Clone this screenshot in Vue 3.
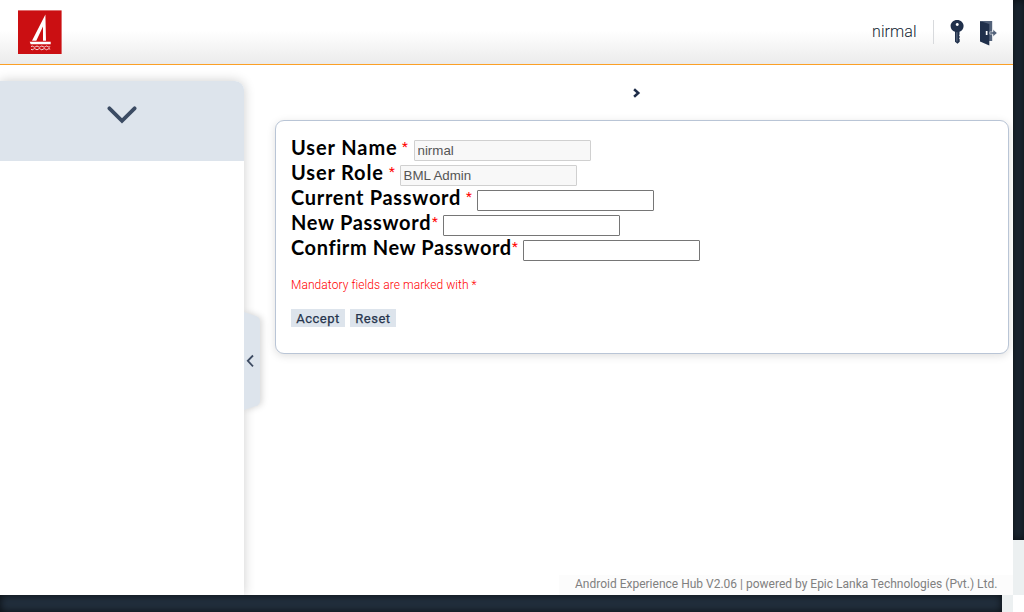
<script setup>
import { ref } from 'vue'

const fields = ref([
  { id: 'user', label: 'User Name', value: 'nirmal', disabled: true, type: 'text' },
  { id: 'role', label: 'User Role', value: 'BML Admin', disabled: true, type: 'text' },
  { id: 'current', label: 'Current Password', value: '', disabled: false, type: 'password' },
  { id: 'next', label: 'New Password', value: '', disabled: false, type: 'password' },
  { id: 'confirm', label: 'Confirm New Password', value: '', disabled: false, type: 'password' },
])
</script>

<template>
  <div class="window">
    <div class="page">
      <header class="header">
        <svg class="logo" viewBox="0 0 44 44">
          <rect width="43.6" height="43.6" y=".4" fill="#cb0f12" />
          <path d="M27.4 4.5 L28 30.8 H25 V16.5 L18.3 30.8 H14 Z" fill="#fff" />
          <path d="M11.7 31.7 H32.7 V34.2 H12.7 Z" fill="#fff" />
          <path d="M13 36.6 q1.2-1.2 2.4 0 t2.4 0 t2.4 0 t2.4 0 t2.4 0 t2.4 0 t2.4 0 t2.4 0 M13 39.2 q1.2 1.2 2.4 0 t2.4 0 t2.4 0 t2.4 0 t2.4 0 t2.4 0 t2.4 0 t2.4 0" fill="none" stroke="#fff" stroke-opacity=".85" stroke-width="1" />
        </svg>
        <div class="account">
          <span class="name">nirmal</span>
          <span class="divider"></span>
          <svg class="key" viewBox="0 0 14 26">
            <path fill-rule="evenodd" fill="#20304b" d="M7.1 .9 C10.8 .9 13.6 3.5 13.6 7 C13.6 9.9 11.7 12 9.5 12.7 V15.5 L9 16.5 L9.7 17.3 V18.5 L9 19.3 L9.7 20.2 V22.8 L7.5 24.8 L5 22.8 V12.7 C2.5 12 .6 9.9 .6 7 C.6 3.5 3.4 .9 7.1 .9 Z M7.2 3.9 A1.5 1.5 0 1 0 7.3 3.9 Z" />
            <path d="M6.9 13.2 V22.5" stroke="#7b8799" stroke-width=".8" />
          </svg>
          <svg class="door" viewBox="0 0 18 26">
            <path d="M1 1 H12.2 V21 H9 Z" fill="#53627a" />
            <path d="M0 1 L9.3 4 V25.4 L0 21.5 Z" fill="#20304b" />
            <rect x="5.8" y="11" width="1.7" height="4" fill="#fff" />
            <path d="M9.8 11.8 H13 V9.4 L17.2 13 L13 16.6 V14.2 H9.8 Z" fill="#53627a" stroke="#fff" stroke-width=".5" />
          </svg>
        </div>
      </header>
      <div class="body">
        <aside class="sidebar">
          <div class="menu-head">
            <svg class="chevron" viewBox="0 0 30 20">
              <path d="M2.4 3.3 L15 15.9 L27.6 3.3" fill="none" stroke="#3b4b63" stroke-width="3.8" stroke-linecap="round" />
            </svg>
          </div>
        </aside>
        <div class="handle">
          <svg viewBox="0 0 17 100">
            <path d="M0 1 L12 5 Q16 6.5 16 10 V90 Q16 93.5 12 95 L0 99 Z" fill="#dde4ec" />
            <path d="M9 44.5 L3.8 49.8 L9 55.3" fill="none" stroke="#3d4b62" stroke-width="1.8" />
          </svg>
        </div>
        <main class="content">
          <div class="crumb">
            <svg viewBox="0 0 8 10"><path d="M1.1 1.2 L5.3 5 L1.1 8.8" fill="none" stroke="#1f2d49" stroke-width="2.5" /></svg>
          </div>
          <section class="card">
            <div v-for="f in fields" :key="f.id" class="field" :class="f.id">
              <label class="label" :for="f.id">{{ f.label }}</label>
              <span class="star">*</span>
              <input :id="f.id" v-model="f.value" class="input" :type="f.type" :disabled="f.disabled" />
            </div>
            <p class="note">Mandatory fields are marked with *</p>
            <div class="actions">
              <button class="btn accept">Accept</button>
              <button class="btn reset">Reset</button>
            </div>
          </section>
          <footer class="footer">Android Experience Hub V2.06 | powered by Epic Lanka Technologies (Pvt.) Ltd.</footer>
        </main>
      </div>
    </div>
    <div class="track-v"><div class="thumb"></div></div>
    <div class="track-h"><div class="thumb"></div></div>
  </div>
</template>

<style>
body { margin: 0; overflow: hidden; background: #fff; }
</style>

<style scoped>
* { box-sizing: border-box; }
.window {
  display: grid;
  grid-template-columns: 1013px 11px;
  grid-template-rows: 595px 17px;
  width: 1024px;
  height: 612px;
  font-family: Roboto, sans-serif;
  background: #fff;
}
.page { display: flex; flex-direction: column; overflow: hidden; }
.header {
  flex: none;
  height: 65px;
  display: flex;
  justify-content: space-between;
  padding: 10px 15px 0 18px;
  border-bottom: 1px solid #fba026;
  background: linear-gradient(#fff 48%, #ebebeb);
}
.logo { width: 44px; height: 44px; }
.account { display: flex; align-items: flex-start; }
.name { font-size: 16px; font-weight: 300; line-height: 20px; margin-top: 12px; color: #101c30; width: 45px; white-space: nowrap; letter-spacing: .1px; }
.divider { width: 1px; height: 24px; margin: 10px 16px 0; background: #d8dadd; }
.key { width: 14px; height: 26px; margin-top: 9px; }
.door { width: 18px; height: 26px; margin: 10px 0 0 16px; }
.body { flex: 1; display: flex; padding-top: 16px; min-height: 0; }
.sidebar {
  position: relative;
  z-index: 1;
  width: 244px;
  flex: none;
  background: #fff;
  border-top-right-radius: 9px;
  box-shadow: 0 0 12px rgba(0, 0, 0, .2);
}
.menu-head {
  height: 80px;
  display: flex;
  justify-content: center;
  padding-top: 24px;
  background: #dde4ec;
  border-top-right-radius: 9px;
}
.chevron { width: 30px; height: 20px; }
.handle { position: relative; z-index: 2; width: 17px; flex: none; margin-top: 230px; }
.handle svg { display: block; width: 17px; height: 100px; filter: drop-shadow(2px 0 3px rgba(0, 0, 0, .16)); overflow: visible; clip-path: inset(-10px -12px -10px 0); }
.content { flex: 1; display: flex; flex-direction: column; padding-left: 14px; min-width: 0; }
.crumb { height: 39px; padding: 7px 0 0 358px; }
.crumb svg { display: block; width: 8px; height: 10px; }
.card {
  width: 734px;
  height: 234px;
  padding: 17px 15px;
  border: 1px solid #b9c5d6;
  border-radius: 9px;
  background: #fff;
  box-shadow: 0 2px 8px rgba(0, 0, 0, .13);
}
.field { display: flex; height: 25px; align-items: flex-start; }
.label {
  font: 700 20px/25px Lato, sans-serif;
  color: #000;
  white-space: nowrap;
  margin-top: -3px;
}
.user .label { width: 111px; letter-spacing: .9px; }
.role .label { width: 98px; letter-spacing: .85px; }
.current .label { width: 175px; letter-spacing: .7px; }
.next .label { width: 141px; letter-spacing: .7px; }
.confirm .label { width: 221px; letter-spacing: .6px; }
.star { width: 11px; font-size: 13.5px; line-height: 16px; color: #f00; }
.user .star { width: 12px; }
.input {
  width: 177px;
  height: 21px;
  margin: 2px 0 0;
  padding: 1px 2.5px;
  border: 1px solid #767676;
  border-radius: 1px;
  background: #fff;
  font: 13.333px "Liberation Sans", Arial, sans-serif;
  outline: none;
}
.input:disabled { border-color: #d0d0d0; background: #f8f8f8; color: #555; }
.note { margin: 14px 0 0; font-size: 12px; font-weight: 300; line-height: 16px; color: #f00; letter-spacing: .07px; }
.actions { display: flex; gap: 5px; margin-top: 16px; }
.btn {
  height: 18px;
  padding: 1px 0 0;
  border: 0;
  background: #dde4ec;
  color: #26344c;
  font: 400 13px/17px Roboto, sans-serif;
  letter-spacing: .5px;
  -webkit-text-stroke: .25px #26344c;
}
.accept { width: 54px; }
.reset { width: 46px; }
.footer {
  height: 20px;
  width: 454px;
  padding-left: 16px;
  margin: auto 0 0 auto;
  line-height: 18px;
  font-size: 12px;
  color: #808080;
  white-space: nowrap;
  background: #fcfcfc;
}
.track-v, .track-h { background: #ecf0f1; }
.track-h { width: 1013px; }
.thumb { background: #222f3d; box-shadow: inset 0 0 8px #0a0e12; }
.track-v .thumb { height: 540px; background: #1d2935; }
.track-h .thumb { width: 1002px; height: 17px; }
</style>
